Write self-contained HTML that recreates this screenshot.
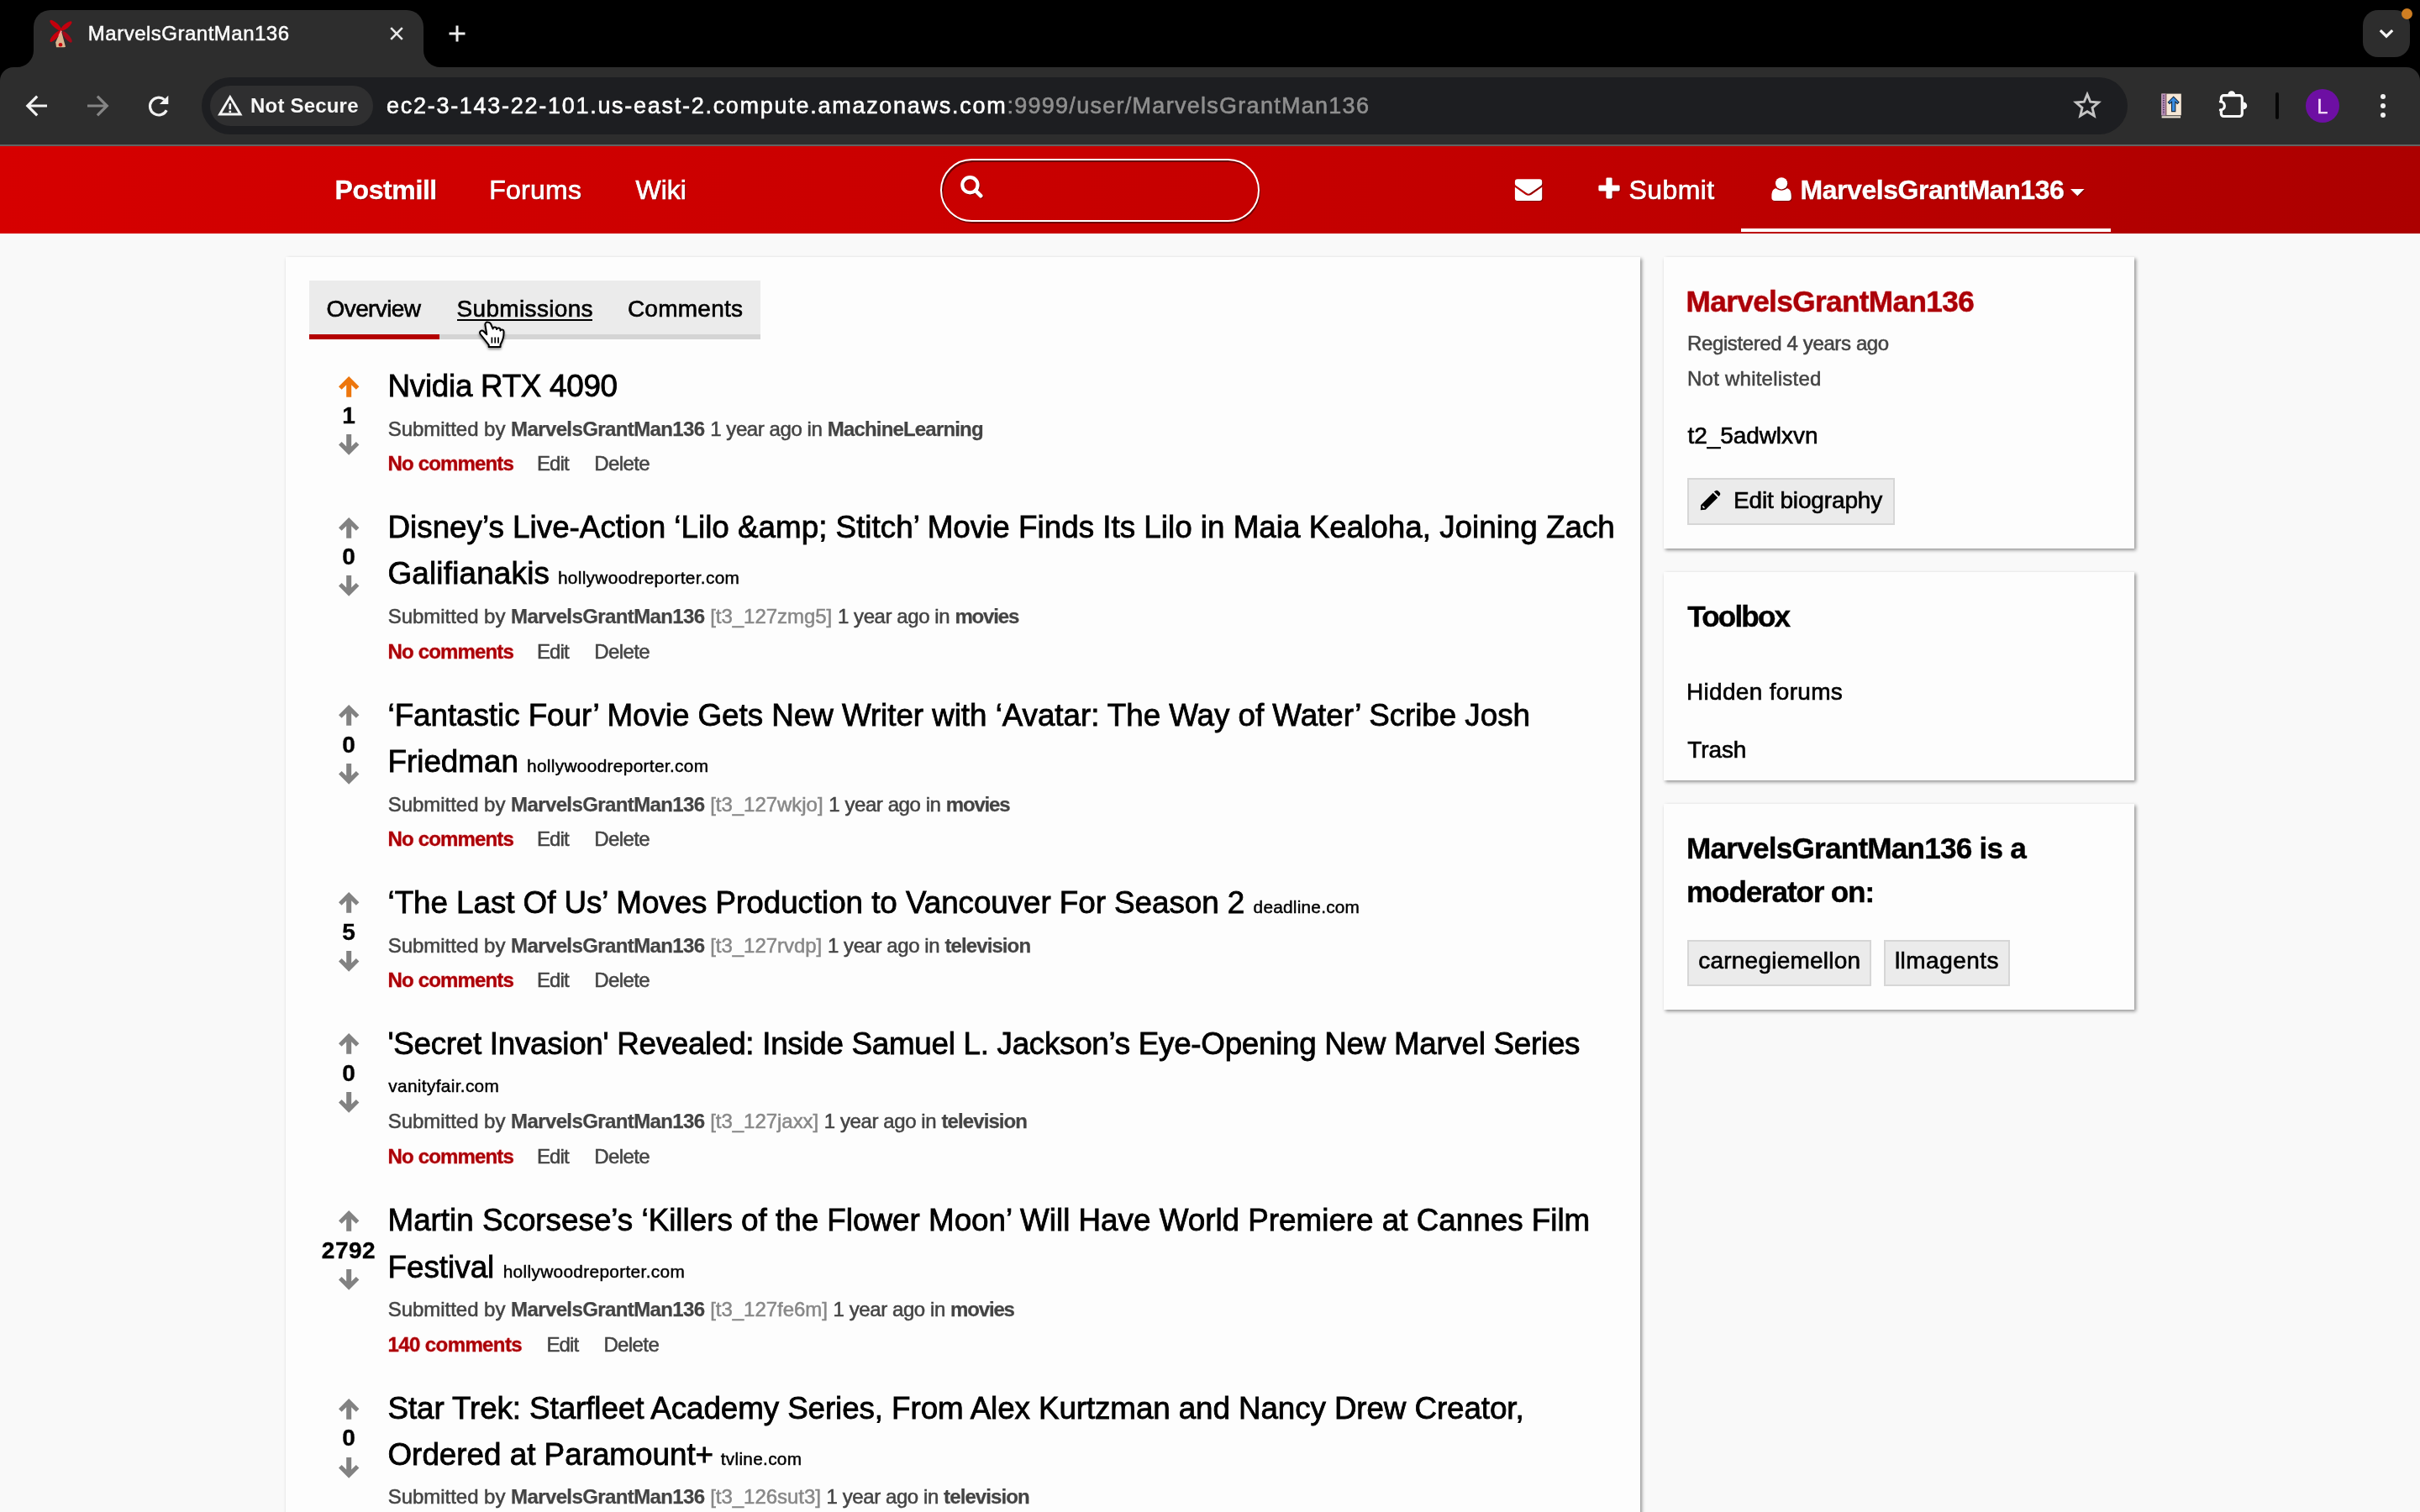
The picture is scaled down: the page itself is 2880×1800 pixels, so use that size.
<!DOCTYPE html>
<html lang="en"><head><meta charset="utf-8"><title>MarvelsGrantMan136</title>
<style>
html,body{margin:0;padding:0}
body{width:2880px;height:1800px;overflow:hidden;position:relative;background:#f9f9f9;font-family:"Liberation Sans",sans-serif;color:#000}
.t{position:absolute;white-space:nowrap;margin:0;padding:0}
#pg{position:absolute;left:0;top:0;width:2880px;height:1800px;overflow:hidden;will-change:transform}
.a{position:absolute}
svg{position:absolute;overflow:visible}
.nav .t{color:#fff;text-shadow:1.4px 1.4px 1px rgba(70,0,0,.45)}
.box{position:absolute;background:#fdfdfd;box-shadow:2px 2px 4px rgba(0,0,0,.42)}
.btn{position:absolute;background:#ebebeb;border:2px solid #d6d6d6;box-sizing:border-box}
.m{color:#444}
.m b{color:#444;-webkit-text-stroke-width:0.25px}
.m i{font-style:normal;color:#888}
.red{color:#ab0008;text-shadow:0 0 2px rgba(255,120,120,.55)}
</style></head><body><div id="pg">
<div class="a" style="left:0;top:0;width:2880px;height:110px;background:#000"></div>
<div class="a" style="left:0;top:80px;width:2880px;height:92px;background:#2d2d2d;border-radius:16px 16px 0 0"></div>
<div class="a" style="left:0;top:172px;width:2880px;height:2px;background:#636363"></div>
<div class="a" style="left:40px;top:12px;width:464px;height:70px;background:#2d2d2d;border-radius:20px 20px 0 0"></div>
<svg style="left:20px;top:60px" width="20" height="20" viewBox="0 0 20 20"><path d="M20 0V20H0A20 20 0 0 0 20 0Z" fill="#2d2d2d"/></svg>
<svg style="left:504px;top:60px" width="20" height="20" viewBox="0 0 20 20"><path d="M0 0V20H20A20 20 0 0 1 0 0Z" fill="#2d2d2d"/></svg>
<svg style="left:56px;top:20px" width="34" height="40" viewBox="56 20 34 40">
<path d="M72.6 35.5 L78 55.8 L76.5 56.3 H67 L66.2 50.5 Z" fill="#d9b58f"/>
<ellipse cx="66.3" cy="30.2" rx="9" ry="2.9" transform="rotate(41.5 66.3 30.2)" fill="#c4000c"/>
<ellipse cx="78.9" cy="31" rx="8.3" ry="2.8" transform="rotate(-39 78.9 31)" fill="#c2000e"/>
<ellipse cx="66" cy="43" rx="9.2" ry="2.8" transform="rotate(-46.5 66 43)" fill="#c8000c"/>
<ellipse cx="80" cy="44" rx="8.3" ry="2.8" transform="rotate(50 80 44)" fill="#a60818"/>
<path d="M69.300 42.500 L72.300 36.300 L73.800 37.200 L70.800 43Z" fill="#ff9a9a"/>
<circle cx="72" cy="53.3" r="2.3" fill="#c40008"/>
</svg>
<div class="t" style="left:104.80px;top:24.18px;font-size:24px;line-height:31px;color:#fafafa;letter-spacing:0.5px;-webkit-text-stroke:0.53px;">MarvelsGrantMan136</div>
<svg style="left:464px;top:32px" width="16" height="16" viewBox="0 0 16 16"><path d="M1.2 1.2L14.8 14.8M14.8 1.2L1.2 14.8" stroke="#e9e9e9" stroke-width="2.6" fill="none"/></svg>
<svg style="left:534px;top:30px" width="20" height="20" viewBox="0 0 20 20"><path d="M10 0.5V19.5M0.5 10H19.5" stroke="#ededed" stroke-width="3" fill="none"/></svg>
<div class="a" style="left:2812px;top:12px;width:56px;height:56px;background:#2d2d2d;border-radius:18px"></div>
<svg style="left:2829px;top:32.7px" width="22" height="14" viewBox="0 0 22 14"><path d="M3.8 3.2L11 10.2L18.2 3.2" stroke="#f5f5f5" stroke-width="3.2" fill="none"/></svg>
<div class="a" style="left:2857.5px;top:9.5px;width:13px;height:13px;border-radius:50%;background:#cf7e22"></div>
<svg style="left:30px;top:112px" width="28" height="28" viewBox="30 112 28 28"><path d="M56 126H35M44.2 114.6L32.8 126L44.2 137.4" stroke="#f2f2f2" stroke-width="3.2" fill="none"/></svg>
<svg style="left:102px;top:112px" width="28" height="28" viewBox="102 112 28 28"><path d="M104 126H125M115.9 114.6L127.3 126L115.9 137.4" stroke="#858585" stroke-width="3.2" fill="none"/></svg>
<svg style="left:174px;top:111px" width="30" height="30" viewBox="174 111 30 30"><path d="M198.2 131.2A10.4 10.4 0 1 1 195.6 118.6" stroke="#f2f2f2" stroke-width="3.2" fill="none"/><path d="M200.3 113.7V124.1H189.9Z" fill="#f2f2f2"/></svg>
<div class="a" style="left:240px;top:92px;width:2292px;height:68px;border-radius:34px;background:#1d1e21"></div>
<div class="a" style="left:250px;top:102px;width:194px;height:48px;border-radius:24px;background:#2f2f30"></div>
<svg style="left:258px;top:111px" width="32" height="28" viewBox="258 111 32 28"><path d="M273.8 115.6L286 136H261.6Z" stroke="#f4f4f4" stroke-width="2.9" fill="none" stroke-linejoin="miter"/><path d="M273.8 123.2V130.2M273.8 131.8V134.2" stroke="#f4f4f4" stroke-width="2.6" fill="none"/></svg>
<div class="t" style="left:298.00px;top:110.18px;font-size:24px;line-height:31px;color:#f7f7f7;font-weight:700;letter-spacing:0.2px;-webkit-text-stroke:0.26px;-webkit-text-stroke:0;">Not Secure</div>
<div class="t" style="left:460.00px;top:109.14px;font-size:27px;line-height:35px;color:#ffffff;letter-spacing:1.72px;-webkit-text-stroke:0.59px;">ec2-3-143-22-101.us-east-2.compute.amazonaws.com<span style="color:#8f8f8f;letter-spacing:1.28px">:9999/user/MarvelsGrantMan136</span></div>
<svg style="left:2468px;top:109px" width="32" height="32" viewBox="0 0 32 32"><path d="M16 3.2L19.7 12.2L29.4 13L22 19.3L24.3 28.8L16 23.7L7.7 28.8L10 19.3L2.6 13L12.3 12.2Z" stroke="#c4c4c4" stroke-width="2.9" fill="none" stroke-linejoin="miter"/></svg>
<svg style="left:2572px;top:111px" width="24" height="30" viewBox="2572 111 24 30">
<rect x="2572.4" y="111.6" width="23.4" height="25.7" fill="#f6e7d6"/>
<rect x="2572.4" y="111.6" width="5.2" height="25.7" fill="#b98fb8"/>
<rect x="2577.4" y="111.6" width="0.9" height="25.7" fill="#5a2d3a"/>
<path d="M2574.9 113.5v22.5" stroke="#3c2a50" stroke-width="1.6" stroke-dasharray="1.2 1.55" fill="none"/>
<rect x="2572.6" y="138.3" width="22.4" height="2.1" fill="#f3e9dc"/>
<path d="M2586.6 115.2L2593 121.7L2591.2 123.4L2588.8 121.2V132.6H2584.5V121.2L2582 123.4L2580.3 121.7Z" fill="#3a8de4" stroke="#12283f" stroke-width="1.1" stroke-linejoin="miter"/>
</svg>
<svg style="left:2640px;top:106px" width="36" height="36" viewBox="2640 106 36 36">
<path d="M2643.4 116.7a3 3 0 0 1 3-3h18.9a3 3 0 0 1 3 3v18.8a3 3 0 0 1 -3 3h-18.9a3 3 0 0 1 -3-3v-4.6h-1a5 5 0 0 0 0-10h1Z" stroke="#fafafa" stroke-width="3.2" fill="none" stroke-linejoin="round"/>
<path d="M2651.4 112.6a4.4 4.4 0 0 1 8.8 0ZM2669.8 121.5a4.4 4.4 0 0 1 0 8.8Z" fill="#fafafa"/>
</svg>
<div class="a" style="left:2708px;top:110px;width:4px;height:32px;background:#060606;border-radius:2px"></div>
<div class="a" style="left:2744px;top:106px;width:40px;height:40px;border-radius:50%;background:#6d0fa3"></div>
<div class="t" style="left:2757.50px;top:111.63px;font-size:23px;line-height:30px;color:#f6def9;-webkit-text-stroke:0.51px;">L</div>
<div class="a" style="left:2832.8px;top:111.6px;width:6.4px;height:6.4px;border-radius:50%;background:#f1f1f1"></div>
<div class="a" style="left:2832.8px;top:122.8px;width:6.4px;height:6.4px;border-radius:50%;background:#f1f1f1"></div>
<div class="a" style="left:2832.8px;top:134.0px;width:6.4px;height:6.4px;border-radius:50%;background:#f1f1f1"></div>
<div class="a nav" style="left:0;top:174px;width:2880px;height:104px;background:linear-gradient(90deg,#d60000 0px,#d10000 340px,#ca0000 1100px,#c40000 1650px,#be0000 2000px,#b80000 2300px,#b20000 2540px,#ac0000 2880px)">
<div class="t" style="left:398.60px;top:30.91px;font-size:32px;line-height:42px;color:#fff;font-weight:700;letter-spacing:-0.4px;-webkit-text-stroke:0.35px;">Postmill</div>
<div class="t" style="left:582.20px;top:30.91px;font-size:32px;line-height:42px;color:#fff;letter-spacing:0.25px;-webkit-text-stroke:0.70px;">Forums</div>
<div class="t" style="left:756.60px;top:30.91px;font-size:32px;line-height:42px;color:#fff;letter-spacing:-0.04px;-webkit-text-stroke:0.70px;">Wiki</div>
<div class="t" style="left:1938.50px;top:30.91px;font-size:32px;line-height:42px;color:#fff;letter-spacing:0.42px;-webkit-text-stroke:0.70px;">Submit</div>
<div class="t" style="left:2142.50px;top:30.91px;font-size:32px;line-height:42px;color:#fff;font-weight:700;letter-spacing:-0.45px;-webkit-text-stroke:0.35px;">MarvelsGrantMan136</div>
<div class="a" style="left:1119px;top:15px;width:380px;height:74.5px;box-sizing:border-box;border:2.2px solid #fff;border-radius:38px;box-shadow:inset 1.5px 2px 0.5px rgba(40,0,0,.6),1px 2px 0.5px rgba(40,0,0,.55)"></div>
<svg style="left:1141px;top:33px;filter:drop-shadow(1px 1px 0.6px rgba(60,0,0,.5))" width="30" height="30" viewBox="1141 207 30 30"><circle cx="1154.4" cy="220.2" r="9.1" stroke="#fff" stroke-width="4.2" fill="none"/><path d="M1161 226.8L1167.2 233.2" stroke="#fff" stroke-width="4.6" stroke-linecap="round"/></svg>
<svg style="left:1802px;top:38px;filter:drop-shadow(1px 1px 0.6px rgba(60,0,0,.5))" width="34" height="28" viewBox="1802 212 34 28">
<path d="M1802.9 216.2a3 3 0 0 1 3-3h26.3a3 3 0 0 1 3 3v2.2c0 1.2-.6 2.2-1.6 2.9l-12.6 8.8c-1.2.8-2.7.8-3.9 0l-12.6-8.8c-1-.7-1.6-1.7-1.6-2.9Z" fill="#fff"/>
<path d="M1802.9 222.7l12.7 9c2 1.4 4.7 1.4 6.9 0l12.7-9v13.4a3 3 0 0 1 -3 3h-26.3a3 3 0 0 1 -3-3Z" fill="#fff"/>
</svg>
<svg style="left:1902px;top:37px;filter:drop-shadow(1px 1px 0.6px rgba(60,0,0,.5))" width="26" height="26" viewBox="0 0 26 26"><path d="M9.4 1.8a1.4 1.4 0 0 1 1.4-1.4h4.4a1.4 1.4 0 0 1 1.4 1.4v7.6h7.6a1.4 1.4 0 0 1 1.4 1.4v4.2a1.4 1.4 0 0 1 -1.4 1.4h-7.6v7.6a1.4 1.4 0 0 1 -1.4 1.4h-4.4a1.4 1.4 0 0 1 -1.4-1.4v-7.6h-7.6a1.4 1.4 0 0 1 -1.4-1.4v-4.2a1.4 1.4 0 0 1 1.4-1.4h7.6Z" fill="#fff"/></svg>
<svg style="left:2108px;top:37px;filter:drop-shadow(1px 1px 0.6px rgba(60,0,0,.5))" width="24" height="28" viewBox="2108 211 24 28">
<circle cx="2120.1" cy="218.3" r="7.1" fill="#fff"/>
<path d="M2113.6 224.3c2 1.6 4.2 2.4 6.5 2.4s4.5-.8 6.5-2.4c3.6.4 5.2 4.2 5.2 9v2.3c0 2-1.5 3.5-3.5 3.5h-16.4c-2 0-3.5-1.500-3.500-3.500v-2.300c0-4.800 1.600-8.600 5.200-9Z" fill="#fff"/>
</svg>
<svg style="left:2463.5px;top:50.6px;filter:drop-shadow(1px 1px 0.6px rgba(60,0,0,.5))" width="17" height="9" viewBox="0 0 17 9"><path d="M0 0H16.6L8.3 8.2Z" fill="#fff"/></svg>
<div class="a" style="left:2072px;top:98px;width:440px;height:4.2px;background:#fff"></div>
</div>
<div class="box" style="left:340px;top:306px;width:1612px;height:1520px"></div>
<div class="a" style="left:368px;top:334px;width:537px;height:64px;background:#ebebeb"></div>
<div class="a" style="left:368px;top:398px;width:537px;height:6px;background:#d4d4d4"></div>
<div class="a" style="left:368px;top:398px;width:155px;height:6px;background:#b30000"></div>
<div class="t" style="left:388.60px;top:349.90px;font-size:28px;line-height:36px;color:#000;letter-spacing:-0.62px;-webkit-text-stroke:0.62px;">Overview</div>
<div class="t" style="left:543.60px;top:349.90px;font-size:28px;line-height:36px;color:#000;letter-spacing:0.32px;-webkit-text-stroke:0.62px;">Submissions</div>
<div class="a" style="left:544.2px;top:380.2px;width:160.4px;height:1.9px;background:#000"></div>
<div class="t" style="left:746.90px;top:349.90px;font-size:28px;line-height:36px;color:#000;letter-spacing:0.25px;-webkit-text-stroke:0.62px;">Comments</div>
<svg style="left:402.7px;top:447.7px" width="24.4" height="24.7" viewBox="0 0 24.4 24.7"><path d="M12.2 0L24.4 12.2L20.8 15.8L15.2 10.2V24.7H9.2V10.2L3.6 15.8L0 12.2Z" fill="#ed760d"/></svg>
<div class="t" style="left:365px;width:100px;text-align:center;top:477.30px;font-size:28px;line-height:36px;font-weight:700;-webkit-text-stroke:0.35px;letter-spacing:0px">1</div>
<svg style="left:402.7px;top:517.4px" width="24.4" height="24.7" viewBox="0 0 24.4 24.7"><path d="M12.2 0L24.4 12.2L20.8 15.8L15.2 10.2V24.7H9.2V10.2L3.6 15.8L0 12.2Z" fill="#828282" transform="rotate(180 12.2 12.35)"/></svg>
<div class="t" style="left:461.50px;top:435.95px;font-size:36.8px;line-height:48px;color:#000;letter-spacing:-0.28px;-webkit-text-stroke:0.81px;">Nvidia RTX 4090</div>
<div class="t m" style="left:461.70px;top:494.58px;font-size:24px;line-height:31px;color:#444;letter-spacing:-0.03px;-webkit-text-stroke:0.53px;">Submitted by <b style="letter-spacing:-0.61px">MarvelsGrantMan136</b> <span style="letter-spacing:-0.42px">1 year ago in </span><b style="letter-spacing:-0.82px">MachineLearning</b></div>
<div class="t red" style="left:461.60px;top:536.38px;font-size:24px;line-height:31px;color:#ab0008;font-weight:700;letter-spacing:-0.85px;-webkit-text-stroke:0.26px;">No comments</div>
<div class="t" style="left:639.00px;top:536.38px;font-size:24px;line-height:31px;color:#444;letter-spacing:-0.9px;-webkit-text-stroke:0.53px;">Edit</div>
<div class="t" style="left:707.30px;top:536.38px;font-size:24px;line-height:31px;color:#444;letter-spacing:-0.6px;-webkit-text-stroke:0.53px;">Delete</div>
<svg style="left:402.7px;top:615.6px" width="24.4" height="24.7" viewBox="0 0 24.4 24.7"><path d="M12.2 0L24.4 12.2L20.8 15.8L15.2 10.2V24.7H9.2V10.2L3.6 15.8L0 12.2Z" fill="#828282"/></svg>
<div class="t" style="left:365px;width:100px;text-align:center;top:645.20px;font-size:28px;line-height:36px;font-weight:700;-webkit-text-stroke:0.35px;letter-spacing:0px">0</div>
<svg style="left:402.7px;top:685.3px" width="24.4" height="24.7" viewBox="0 0 24.4 24.7"><path d="M12.2 0L24.4 12.2L20.8 15.8L15.2 10.2V24.7H9.2V10.2L3.6 15.8L0 12.2Z" fill="#828282" transform="rotate(180 12.2 12.35)"/></svg>
<div class="t" style="left:461.50px;top:603.75px;font-size:36.8px;line-height:48px;color:#000;-webkit-text-stroke:0.81px;">Disney’s Live-Action ‘Lilo &amp;amp; Stitch’ Movie Finds Its Lilo in Maia Kealoha, Joining Zach</div>
<div class="t" style="left:461.50px;top:659.05px;font-size:36.8px;line-height:48px;color:#000;letter-spacing:0.2px;-webkit-text-stroke:0.81px;">Galifianakis</div>
<div class="t" style="left:663.90px;top:674.49px;font-size:20.8px;line-height:27px;color:#000;letter-spacing:0.34px;-webkit-text-stroke:0.46px;">hollywoodreporter.com</div>
<div class="t m" style="left:461.70px;top:718.48px;font-size:24px;line-height:31px;color:#444;letter-spacing:-0.03px;-webkit-text-stroke:0.53px;">Submitted by <b style="letter-spacing:-0.61px">MarvelsGrantMan136</b> <i>[t3_127zmg5]</i> <span style="letter-spacing:-0.42px">1 year ago in </span><b style="letter-spacing:-1.17px">movies</b></div>
<div class="t red" style="left:461.60px;top:759.98px;font-size:24px;line-height:31px;color:#ab0008;font-weight:700;letter-spacing:-0.85px;-webkit-text-stroke:0.26px;">No comments</div>
<div class="t" style="left:639.00px;top:759.98px;font-size:24px;line-height:31px;color:#444;letter-spacing:-0.9px;-webkit-text-stroke:0.53px;">Edit</div>
<div class="t" style="left:707.30px;top:759.98px;font-size:24px;line-height:31px;color:#444;letter-spacing:-0.6px;-webkit-text-stroke:0.53px;">Delete</div>
<svg style="left:402.7px;top:839.3px" width="24.4" height="24.7" viewBox="0 0 24.4 24.7"><path d="M12.2 0L24.4 12.2L20.8 15.8L15.2 10.2V24.7H9.2V10.2L3.6 15.8L0 12.2Z" fill="#828282"/></svg>
<div class="t" style="left:365px;width:100px;text-align:center;top:868.90px;font-size:28px;line-height:36px;font-weight:700;-webkit-text-stroke:0.35px;letter-spacing:0px">0</div>
<svg style="left:402.7px;top:909.0px" width="24.4" height="24.7" viewBox="0 0 24.4 24.7"><path d="M12.2 0L24.4 12.2L20.8 15.8L15.2 10.2V24.7H9.2V10.2L3.6 15.8L0 12.2Z" fill="#828282" transform="rotate(180 12.2 12.35)"/></svg>
<div class="t" style="left:461.50px;top:827.55px;font-size:36.8px;line-height:48px;color:#000;letter-spacing:-0.047px;-webkit-text-stroke:0.81px;">‘Fantastic Four’ Movie Gets New Writer with ‘Avatar: The Way of Water’ Scribe Josh</div>
<div class="t" style="left:461.50px;top:882.75px;font-size:36.8px;line-height:48px;color:#000;-webkit-text-stroke:0.81px;">Friedman</div>
<div class="t" style="left:627.00px;top:898.19px;font-size:20.8px;line-height:27px;color:#000;letter-spacing:0.34px;-webkit-text-stroke:0.46px;">hollywoodreporter.com</div>
<div class="t m" style="left:461.70px;top:941.98px;font-size:24px;line-height:31px;color:#444;letter-spacing:-0.03px;-webkit-text-stroke:0.53px;">Submitted by <b style="letter-spacing:-0.61px">MarvelsGrantMan136</b> <i>[t3_127wkjo]</i> <span style="letter-spacing:-0.42px">1 year ago in </span><b style="letter-spacing:-1.17px">movies</b></div>
<div class="t red" style="left:461.60px;top:983.38px;font-size:24px;line-height:31px;color:#ab0008;font-weight:700;letter-spacing:-0.85px;-webkit-text-stroke:0.26px;">No comments</div>
<div class="t" style="left:639.00px;top:983.38px;font-size:24px;line-height:31px;color:#444;letter-spacing:-0.9px;-webkit-text-stroke:0.53px;">Edit</div>
<div class="t" style="left:707.30px;top:983.38px;font-size:24px;line-height:31px;color:#444;letter-spacing:-0.6px;-webkit-text-stroke:0.53px;">Delete</div>
<svg style="left:402.7px;top:1062.4px" width="24.4" height="24.7" viewBox="0 0 24.4 24.7"><path d="M12.2 0L24.4 12.2L20.8 15.8L15.2 10.2V24.7H9.2V10.2L3.6 15.8L0 12.2Z" fill="#828282"/></svg>
<div class="t" style="left:365px;width:100px;text-align:center;top:1092.00px;font-size:28px;line-height:36px;font-weight:700;-webkit-text-stroke:0.35px;letter-spacing:0px">5</div>
<svg style="left:402.7px;top:1132.1px" width="24.4" height="24.7" viewBox="0 0 24.4 24.7"><path d="M12.2 0L24.4 12.2L20.8 15.8L15.2 10.2V24.7H9.2V10.2L3.6 15.8L0 12.2Z" fill="#828282" transform="rotate(180 12.2 12.35)"/></svg>
<div class="t" style="left:461.50px;top:1050.65px;font-size:36.8px;line-height:48px;color:#000;letter-spacing:-0.05px;-webkit-text-stroke:0.81px;">‘The Last Of Us’ Moves Production to Vancouver For Season 2</div>
<div class="t" style="left:1491.60px;top:1066.09px;font-size:20.8px;line-height:27px;color:#000;letter-spacing:0.24px;-webkit-text-stroke:0.46px;">deadline.com</div>
<div class="t m" style="left:461.70px;top:1109.68px;font-size:24px;line-height:31px;color:#444;letter-spacing:-0.03px;-webkit-text-stroke:0.53px;">Submitted by <b style="letter-spacing:-0.61px">MarvelsGrantMan136</b> <i>[t3_127rvdp]</i> <span style="letter-spacing:-0.42px">1 year ago in </span><b style="letter-spacing:-0.9px">television</b></div>
<div class="t red" style="left:461.60px;top:1151.08px;font-size:24px;line-height:31px;color:#ab0008;font-weight:700;letter-spacing:-0.85px;-webkit-text-stroke:0.26px;">No comments</div>
<div class="t" style="left:639.00px;top:1151.08px;font-size:24px;line-height:31px;color:#444;letter-spacing:-0.9px;-webkit-text-stroke:0.53px;">Edit</div>
<div class="t" style="left:707.30px;top:1151.08px;font-size:24px;line-height:31px;color:#444;letter-spacing:-0.6px;-webkit-text-stroke:0.53px;">Delete</div>
<svg style="left:402.7px;top:1230.4px" width="24.4" height="24.7" viewBox="0 0 24.4 24.7"><path d="M12.2 0L24.4 12.2L20.8 15.8L15.2 10.2V24.7H9.2V10.2L3.6 15.8L0 12.2Z" fill="#828282"/></svg>
<div class="t" style="left:365px;width:100px;text-align:center;top:1260.00px;font-size:28px;line-height:36px;font-weight:700;-webkit-text-stroke:0.35px;letter-spacing:0px">0</div>
<svg style="left:402.7px;top:1300.1px" width="24.4" height="24.7" viewBox="0 0 24.4 24.7"><path d="M12.2 0L24.4 12.2L20.8 15.8L15.2 10.2V24.7H9.2V10.2L3.6 15.8L0 12.2Z" fill="#828282" transform="rotate(180 12.2 12.35)"/></svg>
<div class="t" style="left:461.50px;top:1218.65px;font-size:36.8px;line-height:48px;color:#000;letter-spacing:-0.29px;-webkit-text-stroke:0.81px;">'Secret Invasion' Revealed: Inside Samuel L. Jackson’s Eye-Opening New Marvel Series</div>
<div class="t" style="left:462.30px;top:1279.49px;font-size:20.8px;line-height:27px;color:#000;letter-spacing:0.34px;-webkit-text-stroke:0.46px;">vanityfair.com</div>
<div class="t m" style="left:461.70px;top:1318.98px;font-size:24px;line-height:31px;color:#444;letter-spacing:-0.03px;-webkit-text-stroke:0.53px;">Submitted by <b style="letter-spacing:-0.61px">MarvelsGrantMan136</b> <i>[t3_127jaxx]</i> <span style="letter-spacing:-0.42px">1 year ago in </span><b style="letter-spacing:-0.9px">television</b></div>
<div class="t red" style="left:461.60px;top:1361.18px;font-size:24px;line-height:31px;color:#ab0008;font-weight:700;letter-spacing:-0.85px;-webkit-text-stroke:0.26px;">No comments</div>
<div class="t" style="left:639.00px;top:1361.18px;font-size:24px;line-height:31px;color:#444;letter-spacing:-0.9px;-webkit-text-stroke:0.53px;">Edit</div>
<div class="t" style="left:707.30px;top:1361.18px;font-size:24px;line-height:31px;color:#444;letter-spacing:-0.6px;-webkit-text-stroke:0.53px;">Delete</div>
<svg style="left:402.7px;top:1441.2px" width="24.4" height="24.7" viewBox="0 0 24.4 24.7"><path d="M12.2 0L24.4 12.2L20.8 15.8L15.2 10.2V24.7H9.2V10.2L3.6 15.8L0 12.2Z" fill="#828282"/></svg>
<div class="t" style="left:365px;width:100px;text-align:center;top:1470.80px;font-size:28px;line-height:36px;font-weight:700;-webkit-text-stroke:0.35px;letter-spacing:0.5px">2792</div>
<svg style="left:402.7px;top:1510.9px" width="24.4" height="24.7" viewBox="0 0 24.4 24.7"><path d="M12.2 0L24.4 12.2L20.8 15.8L15.2 10.2V24.7H9.2V10.2L3.6 15.8L0 12.2Z" fill="#828282" transform="rotate(180 12.2 12.35)"/></svg>
<div class="t" style="left:461.50px;top:1429.45px;font-size:36.8px;line-height:48px;color:#000;-webkit-text-stroke:0.81px;">Martin Scorsese’s ‘Killers of the Flower Moon’ Will Have World Premiere at Cannes Film</div>
<div class="t" style="left:461.50px;top:1485.05px;font-size:36.8px;line-height:48px;color:#000;-webkit-text-stroke:0.81px;">Festival</div>
<div class="t" style="left:598.70px;top:1500.49px;font-size:20.8px;line-height:27px;color:#000;letter-spacing:0.34px;-webkit-text-stroke:0.46px;">hollywoodreporter.com</div>
<div class="t m" style="left:461.70px;top:1543.28px;font-size:24px;line-height:31px;color:#444;letter-spacing:-0.03px;-webkit-text-stroke:0.53px;">Submitted by <b style="letter-spacing:-0.61px">MarvelsGrantMan136</b> <i>[t3_127fe6m]</i> <span style="letter-spacing:-0.42px">1 year ago in </span><b style="letter-spacing:-1.17px">movies</b></div>
<div class="t red" style="left:461.60px;top:1584.78px;font-size:24px;line-height:31px;color:#ab0008;font-weight:700;letter-spacing:-0.61px;-webkit-text-stroke:0.26px;">140 comments</div>
<div class="t" style="left:650.50px;top:1584.78px;font-size:24px;line-height:31px;color:#444;letter-spacing:-0.9px;-webkit-text-stroke:0.53px;">Edit</div>
<div class="t" style="left:718.40px;top:1584.78px;font-size:24px;line-height:31px;color:#444;letter-spacing:-0.6px;-webkit-text-stroke:0.53px;">Delete</div>
<svg style="left:402.7px;top:1664.8px" width="24.4" height="24.7" viewBox="0 0 24.4 24.7"><path d="M12.2 0L24.4 12.2L20.8 15.8L15.2 10.2V24.7H9.2V10.2L3.6 15.8L0 12.2Z" fill="#828282"/></svg>
<div class="t" style="left:365px;width:100px;text-align:center;top:1694.40px;font-size:28px;line-height:36px;font-weight:700;-webkit-text-stroke:0.35px;letter-spacing:0px">0</div>
<svg style="left:402.7px;top:1734.5px" width="24.4" height="24.7" viewBox="0 0 24.4 24.7"><path d="M12.2 0L24.4 12.2L20.8 15.8L15.2 10.2V24.7H9.2V10.2L3.6 15.8L0 12.2Z" fill="#828282" transform="rotate(180 12.2 12.35)"/></svg>
<div class="t" style="left:461.50px;top:1653.05px;font-size:36.8px;line-height:48px;color:#000;letter-spacing:-0.1px;-webkit-text-stroke:0.81px;">Star Trek: Starfleet Academy Series, From Alex Kurtzman and Nancy Drew Creator,</div>
<div class="t" style="left:461.50px;top:1707.75px;font-size:36.8px;line-height:48px;color:#000;-webkit-text-stroke:0.81px;">Ordered at Paramount+</div>
<div class="t" style="left:857.80px;top:1723.19px;font-size:20.8px;line-height:27px;color:#000;letter-spacing:0.29px;-webkit-text-stroke:0.46px;">tvline.com</div>
<div class="t m" style="left:461.70px;top:1765.68px;font-size:24px;line-height:31px;color:#444;letter-spacing:-0.03px;-webkit-text-stroke:0.53px;">Submitted by <b style="letter-spacing:-0.61px">MarvelsGrantMan136</b> <i>[t3_126sut3]</i> <span style="letter-spacing:-0.42px">1 year ago in </span><b style="letter-spacing:-0.9px">television</b></div>
<div class="box" style="left:1980px;top:306px;width:560px;height:347px"></div>
<div class="t red" style="left:2006.60px;top:335.60px;font-size:35.2px;line-height:46px;color:#ab0008;font-weight:700;letter-spacing:-0.64px;-webkit-text-stroke:0.39px;">MarvelsGrantMan136</div>
<div class="t" style="left:2008.00px;top:393.08px;font-size:24px;line-height:31px;color:#444;letter-spacing:-0.38px;-webkit-text-stroke:0.53px;">Registered 4 years ago</div>
<div class="t" style="left:2008.00px;top:435.08px;font-size:24px;line-height:31px;color:#444;letter-spacing:0.24px;-webkit-text-stroke:0.53px;">Not whitelisted</div>
<div class="t" style="left:2008.50px;top:501.10px;font-size:28px;line-height:36px;color:#000;letter-spacing:-0.07px;-webkit-text-stroke:0.62px;">t2_5adwlxvn</div>
<div class="btn" style="left:2008px;top:569px;width:247px;height:55.5px"></div>
<svg style="left:2023px;top:581.8px" width="26" height="26" viewBox="0 0 26 26"><path d="M0.8 25.2L1.2 19.2L15.6 4.8L21.2 10.4L6.8 24.8Z M18.2 2.5c1-1 2.600-1 3.600 0l1.700 1.700c1 1 1 2.600 0 3.600l-1.100 1.100-5.600-5.600Z" fill="#000"/><path d="M3.3 20.6l2.100 2.100" stroke="#ebebeb" stroke-width="1.6"/></svg>
<div class="t" style="left:2063.00px;top:578.30px;font-size:28px;line-height:36px;color:#000;letter-spacing:-0.13px;-webkit-text-stroke:0.62px;">Edit biography</div>
<div class="box" style="left:1980px;top:681px;width:560px;height:248px"></div>
<div class="t" style="left:2008.20px;top:710.70px;font-size:35.2px;line-height:46px;color:#000;font-weight:700;letter-spacing:-1.89px;-webkit-text-stroke:0.39px;">Toolbox</div>
<div class="t" style="left:2007.00px;top:805.70px;font-size:28px;line-height:36px;color:#000;letter-spacing:0.31px;-webkit-text-stroke:0.62px;">Hidden forums</div>
<div class="t" style="left:2008.20px;top:875.40px;font-size:28px;line-height:36px;color:#000;letter-spacing:-0.09px;-webkit-text-stroke:0.62px;">Trash</div>
<div class="box" style="left:1980px;top:957px;width:560px;height:245px"></div>
<div class="t" style="left:2007.00px;top:986.70px;font-size:35.2px;line-height:46px;color:#000;font-weight:700;letter-spacing:-0.8px;-webkit-text-stroke:0.39px;">MarvelsGrantMan136 is a</div>
<div class="t" style="left:2007.00px;top:1039.40px;font-size:35.2px;line-height:46px;color:#000;font-weight:700;letter-spacing:-1.2px;-webkit-text-stroke:0.39px;">moderator on:</div>
<div class="btn" style="left:2008px;top:1118.5px;width:219px;height:55px"></div>
<div class="t" style="left:2021.20px;top:1126.10px;font-size:28px;line-height:36px;color:#000;letter-spacing:0.23px;-webkit-text-stroke:0.62px;">carnegiemellon</div>
<div class="btn" style="left:2241.5px;top:1118.5px;width:150.5px;height:55px"></div>
<div class="t" style="left:2254.90px;top:1126.10px;font-size:28px;line-height:36px;color:#000;letter-spacing:0.48px;-webkit-text-stroke:0.62px;">llmagents</div>
<svg style="left:570px;top:380px;filter:drop-shadow(0.5px 2px 1.5px rgba(0,0,0,.45))" width="34" height="36" viewBox="-1 -2 34 36">
<path d="M9.2 1.6c-1.700-.200-3 1.200-2.800 2.900l1.900 11.700-3.900-3.900c-1.100-1.100-2.900-1-3.800.200-.800 1.100-.600 2.400.200 3.500l9.900 12.700v2.300h13.800v-2.700c2.400-4.500 4-8.800 4-13.600v-2.200c0-2.300-3.200-2.800-4.100-.900v-1c0-2.500-3.700-2.800-4.400-.500v-.6c-.300-2.600-4-2.500-4.400-.100l-2.600-5.900c-.600-1.200-2-1.800-3.800-1.900Z" fill="#fff" stroke="#000" stroke-width="2" stroke-linejoin="round"/>
<path d="M14.4 19.400v7M18.200 19.400v7M22 19.400v7" stroke="#000" stroke-width="1.700" fill="none"/>
</svg>
</div></body></html>
